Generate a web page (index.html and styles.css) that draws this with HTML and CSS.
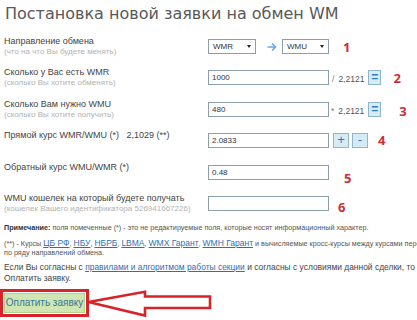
FILE: index.html
```html
<!DOCTYPE html>
<html lang="ru">
<head>
<meta charset="utf-8">
<title>Постановка новой заявки на обмен WM</title>
<link rel="stylesheet" href="styles.css">
</head>
<body>
<h1 class="title">Постановка новой заявки на обмен WM</h1>

<div class="form">
  <div class="row">
    <div class="label">
      <div class="main">Направление обмена</div>
      <div class="hint">(что на что Вы будете менять)</div>
    </div>
    <div class="controls">
      <div class="select sel-from"><span>WMR</span><i class="caret"></i></div>
      <svg class="dir-arrow" width="10" height="10" viewBox="0 0 10 10"><path d="M0.5 5 H8.5 M5 1.5 L8.5 5 L5 8.5" fill="none" stroke="#69a8e2" stroke-width="1.6"/></svg>
      <div class="select sel-to"><span>WMU</span><i class="caret"></i></div>
      <span class="mark m1">1</span>
    </div>
  </div>

  <div class="row">
    <div class="label">
      <div class="main">Сколько у Вас есть WMR</div>
      <div class="hint">(сколько Вы хотите обменять)</div>
    </div>
    <div class="controls">
      <div class="field">1000</div>
      <span class="rate"><span class="op">/</span>2,2121</span>
      <span class="btn">=</span>
      <span class="mark m2">2</span>
    </div>
  </div>

  <div class="row">
    <div class="label">
      <div class="main">Сколько Вам нужно WMU</div>
      <div class="hint">(сколько Вы хотите получить)</div>
    </div>
    <div class="controls">
      <div class="field">480</div>
      <span class="rate"><span class="op star">*</span>2,2121</span>
      <span class="btn">=</span>
      <span class="mark m3">3</span>
    </div>
  </div>

  <div class="row">
    <div class="label">
      <div class="main">Прямой курс WMR/WMU (*) &nbsp; 2,1029 (**)</div>
    </div>
    <div class="controls">
      <div class="field">2.0833</div>
      <span class="btn pm">+</span>
      <span class="btn pm">-</span>
      <span class="mark m4">4</span>
    </div>
  </div>

  <div class="row">
    <div class="label">
      <div class="main">Обратный курс WMU/WMR (*)</div>
    </div>
    <div class="controls">
      <div class="field">0.48</div>
      <span class="mark m5">5</span>
    </div>
  </div>

  <div class="row last">
    <div class="label">
      <div class="main">WMU кошелек на который будете получать</div>
      <div class="hint">(кошелек Вашего идентификатора 526941667226)</div>
    </div>
    <div class="controls">
      <div class="field"></div>
      <span class="mark m6">6</span>
    </div>
  </div>
</div>

<div class="notes">
  <p class="note"><b>Примечание:</b> поля помеченные (*) - это не редактируемые поля, которые носят информационный характер.</p>
  <p class="note sources">(**) - Курсы <a href="#">ЦБ РФ</a>, <a href="#">НБУ</a>, <a href="#">НБРБ</a>, <a href="#">LBMA</a>, <a href="#">WMX Гарант</a>, <a href="#">WMH Гарант</a> и вычисляемые кросс-курсы между курсами перечисленных источников<br>по ряду направлений обмена.</p>
  <p class="agree">Если Вы согласны с <a href="#">правилами и алгоритмом работы секции</a> и согласны с условиями данной сделки, то нажмите кнопку<br>Оплатить заявку.</p>
</div>

<div class="pay-row">
  <div class="pay-frame"><span class="pay-btn">Оплатить заявку</span></div>
  <svg class="pay-arrow" width="128" height="28" viewBox="0 0 128 28"><polygon points="2.5,12 59,1.8 59,6.5 124,6.5 124,18 59,18 59,25.5" fill="#fff" stroke="#d8232a" stroke-width="2.6" stroke-linejoin="miter"/></svg>
</div>
</body>
</html>
```

FILE: styles.css
```css
html, body {
  margin: 0;
  padding: 0;
  overflow: hidden;
  background: #fff;
}
body {
  width: 417px;
  height: 320px;
  font-family: "Liberation Sans", Arial, sans-serif;
  color: #444;
}
.title {
  margin: 0;
  padding: 4px 0 0 5px;
  font-family: "DejaVu Sans", sans-serif;
  font-size: 16px;
  line-height: 20px;
  font-weight: normal;
  color: #585858;
  white-space: nowrap;
}
.form {
  margin-top: 15px;
  padding-left: 4px;
}
.row {
  display: flex;
  align-items: flex-start;
  height: 31.4px;
}
.row.last {
  height: auto;
}
.label {
  width: 204px;
  flex: none;
  margin-top: -3px;
}
.main {
  font-size: 9px;
  line-height: 11px;
  color: #444;
  white-space: nowrap;
}
.hint {
  font-size: 8px;
  line-height: 10px;
  color: #b2b2b2;
  white-space: nowrap;
}
.controls {
  display: flex;
  align-items: flex-start;
}
.select {
  box-sizing: border-box;
  height: 15px;
  border: 1px solid #8d9fa8;
  display: flex;
  align-items: center;
  justify-content: space-between;
  padding: 0 4px 0 4px;
  font-size: 8px;
  color: #333;
}
.sel-from { width: 48px; }
.sel-to { width: 47px; }
.caret {
  width: 0;
  height: 0;
  border-left: 2px solid transparent;
  border-right: 2px solid transparent;
  border-top: 3px solid #222;
}
.dir-arrow {
  margin: 3px 5px 0 11px;
}
.field {
  box-sizing: border-box;
  width: 121px;
  height: 15px;
  border: 1px solid #8d9fa8;
  padding-left: 3px;
  font-size: 8px;
  line-height: 13px;
  color: #333;
}
.rate {
  font-size: 8.5px;
  color: #555;
  margin: 4px 0 0 3px;
  line-height: 11px;
}
.op {
  margin-right: 4px;
  color: #777;
}
.op.star { margin-left: -1px; }
.btn {
  box-sizing: border-box;
  width: 13px;
  height: 15px;
  margin-left: 4px;
  background: #d7ebf6;
  border: 1px solid #8fb6cc;
  color: #2a7fc0;
  font-size: 12px;
  line-height: 12px;
  font-weight: bold;
  text-align: center;
}
.btn.pm {
  width: 16px;
  font-weight: normal;
  font-size: 13px;
}
.btn.pm + .btn.pm { margin-left: 3px; }
.mark {
  font-family: "Open Sans", "Liberation Sans", sans-serif;
  font-weight: bold;
  font-size: 13px;
  line-height: 13px;
  color: #cc2f3a;
}
.m1 { margin: 2px 0 0 14px; }
.m2 { margin: 2px 0 0 12px; }
.m3 { margin: 3px 0 0 18px; }
.m4 { margin: 1px 0 0 10px; }
.m5 { margin: 7px 0 0 15px; }
.m6 { margin: 5px 0 0 9px; }

.notes {
  padding-left: 4px;
  color: #555;
  white-space: nowrap;
}
.note {
  margin: 9px 0 0 0;
  font-size: 7.2px;
  line-height: 10px;
}
.note b { color: #333; }
.sources {
  margin-top: 6px;
  line-height: 9px;
}
.sources a {
  font-size: 8.5px;
}
a {
  color: #2f6fb0;
  text-decoration: underline;
}
.agree {
  margin: 5px 0 0 0;
  font-size: 8.45px;
  line-height: 11px;
  color: #444;
}
.pay-row {
  display: flex;
  align-items: flex-start;
  margin-top: 5px;
}
.pay-frame {
  border: 3px solid #d8232a;
  padding: 1px;
}
.pay-btn {
  display: block;
  box-sizing: border-box;
  width: 81px;
  height: 20px;
  background: #cfe6b2;
  border: 1px solid #b3d094;
  color: #35789a;
  font-size: 10px;
  line-height: 18px;
  text-align: center;
}
.pay-arrow {
  margin: 1px 0 0 -3px;
}
```
